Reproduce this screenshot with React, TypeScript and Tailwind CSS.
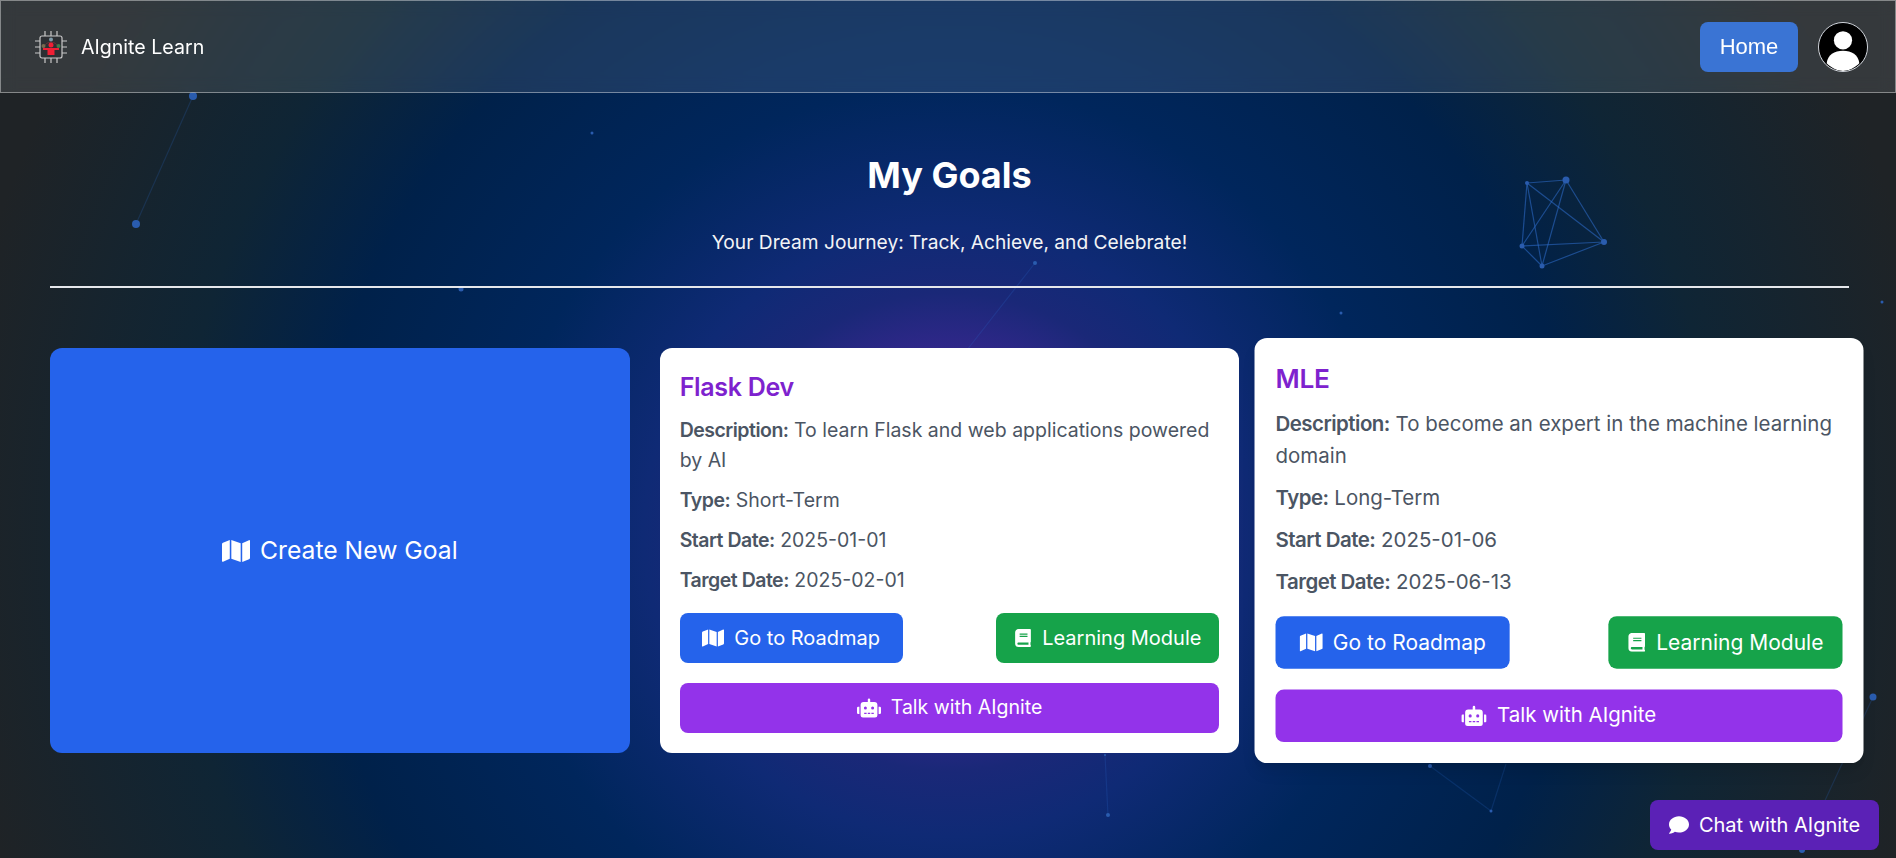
import { FaMap, FaBook, FaRobot, FaComment } from "react-icons/fa";

const dots: [number, number, number][] = [
  [193, 96, 4], [136, 224, 4], [592, 133, 1.5], [461, 289, 2.5], [1035, 263, 2], [967, 350, 1],
  [1527, 183, 2], [1566, 180, 3.5], [1604, 242, 3], [1522, 246, 2.5], [1542, 266, 2.5],
  [1341, 313, 1.5], [1882, 302, 1.5], [1430, 766, 2], [1491, 811, 1.5], [1873, 697, 3.5],
  [1802, 850, 3], [1108, 815, 2], [1105, 755, 1],
];

const links: [number, number, number, number][] = [
  [193, 96, 136, 224], [1035, 263, 967, 350],
  [1527, 183, 1566, 180], [1527, 183, 1542, 266], [1527, 183, 1522, 246], [1527, 183, 1604, 242],
  [1566, 180, 1522, 246], [1566, 180, 1542, 266], [1566, 180, 1604, 242],
  [1522, 246, 1604, 242], [1522, 246, 1542, 266], [1542, 266, 1604, 242],
  [1430, 766, 1491, 811], [1491, 811, 1506, 764], [1873, 697, 1802, 850], [1108, 815, 1105, 755],
];

const goals = [
  {
    title: "Flask Dev",
    description: "To learn Flask and web applications powered by AI",
    type: "Short-Term",
    start: "2025-01-01",
    target: "2025-02-01",
    featured: false,
  },
  {
    title: "MLE",
    description: "To become an expert in the machine learning domain",
    type: "Long-Term",
    start: "2025-01-06",
    target: "2025-06-13",
    featured: true,
  },
];

const Particles = () => (
  <svg className="absolute inset-0 h-full w-full" viewBox="0 0 1896 858">
    {links.map(([x1, y1, x2, y2], i) => (
      <line
        key={i}
        x1={x1}
        y1={y1}
        x2={x2}
        y2={y2}
        stroke="#2f6fd0"
        strokeOpacity={x1 > 1500 && x1 < 1620 ? 0.55 : 0.2}
        strokeWidth="1.2"
      />
    ))}
    {dots.map(([cx, cy, r], i) => (
      <circle key={i} cx={cx} cy={cy} r={r} fill="#2a5cae" />
    ))}
  </svg>
);

const Logo = () => (
  <svg width="34" height="34" viewBox="0 0 34 34" fill="none">
    <rect x="6" y="6" width="22" height="22" rx="2" stroke="#c9c9c9" strokeWidth="1.2" fill="#2c2f33" />
    <path
      d="M11 1v5M17 1v5M23 1v5M11 28v5M17 28v5M23 28v5M1 11h5M1 17h5M1 23h5M28 11h5M28 17h5M28 23h5"
      stroke="#c9c9c9"
      strokeWidth="1.2"
    />
    <path d="M10 17a7.500 7.500 0 0 1 14 0" stroke="#7a3038" strokeWidth="0.8" />
    <circle cx="17" cy="9.500" r="2" fill="#7f9aa8" />
    <circle cx="9.500" cy="16" r="2" fill="#7a6a50" />
    <circle cx="24.500" cy="16" r="2" fill="#3f7a4a" />
    <circle cx="17" cy="15" r="2.500" fill="#f01f35" />
    <path d="M9 18h16v2h-4.500v5h-7v-5H9z" fill="#f01f35" />
  </svg>
);

const Avatar = () => (
  <svg className="h-[50px] w-[50px] rounded-full border border-gray-300" viewBox="0 0 50 50">
    <circle cx="25" cy="25" r="25" fill="#000" />
    <circle cx="25" cy="18" r="9.500" fill="#fff" />
    <path d="M8 42c1-9 8-13 17-13s16 4 17 13c-4 4-10 8-17 8S12 46 8 42z" fill="#fff" />
  </svg>
);

const Field = ({ label, value }: { label: string; value: string }) => (
  <p className="mb-[10px] text-[19.5px] leading-[30px] text-[#4b5563]">
    <span className="font-semibold tracking-[-0.5px]">{label}:</span> {value}
  </p>
);

const GoalCard = ({ goal }: { goal: (typeof goals)[number] }) => (
  <div className={`rounded-xl bg-white px-5 pt-[23px] pb-5 ${goal.featured ? "scale-105 shadow-lg" : ""}`}>
    <h2 className="mb-3 text-[25px] leading-8 font-semibold tracking-[-0.3px] text-[#7e22ce]">{goal.title}</h2>
    <Field label="Description" value={goal.description} />
    <Field label="Type" value={goal.type} />
    <Field label="Start Date" value={goal.start} />
    <Field label="Target Date" value={goal.target} />
    <div className="mt-[18px] flex justify-between text-[20px] text-white">
      <button className="flex h-[50px] w-[223px] items-center justify-center gap-[10px] rounded-lg bg-[#2563eb]">
        <FaMap className="text-[22px]" />
        Go to Roadmap
      </button>
      <button className="flex h-[50px] w-[223px] items-center justify-center gap-[10px] rounded-lg bg-[#16a34a]">
        <FaBook className="text-[18px]" />
        Learning Module
      </button>
    </div>
    <button className="mt-5 flex h-[50px] w-full items-center justify-center gap-[10px] rounded-lg bg-[#9333ea] text-[19.5px] text-white">
      <FaRobot className="text-[24px]" />
      Talk with AIgnite
    </button>
  </div>
);

export default function App() {
  return (
    <div className="relative h-screen overflow-hidden bg-[radial-gradient(circle_at_50%_62%,#4a2a9c_0%,#33278c_16%,#1a2878_22%,#0f2a75_28%,#00265c_41%,#00214a_58%,#0f2535_71%,#1f2326_92%)] font-['Inter',sans-serif] text-white">
      <Particles />

      <div className="relative">
        <nav className="flex h-[93px] items-center justify-between border border-white/40 bg-white/10 pr-[27px] pl-[33px] backdrop-blur-sm">
          <div className="flex items-center gap-[13px]">
            <Logo />
            <span className="pt-[3px] text-[19.6px]">AIgnite Learn</span>
          </div>
          <div className="flex items-center gap-5">
            <button className="h-[50px] w-[98px] rounded-lg bg-[#3a74d4] font-['Liberation_Sans',sans-serif] text-[22px] text-white">
              Home
            </button>
            <Avatar />
          </div>
        </nav>

        <main className="pr-[47px] pl-[50px]">
          <header className="border-b-2 border-gray-200 pt-[60px] pb-[30px] text-center">
            <h1 className="text-[36px] leading-[44px] font-bold">My Goals</h1>
            <p className="mt-[31px] text-[19.2px] leading-7 text-gray-100">
              Your Dream Journey: Track, Achieve, and Celebrate!
            </p>
          </header>

          <div className="mt-[60px] grid grid-cols-3 gap-[30px]">
            <button className="flex items-center justify-center gap-[10px] rounded-xl bg-[#2563eb] text-[24.7px] text-white">
              <FaMap className="text-[28px]" />
              Create New Goal
            </button>
            {goals.map((goal) => (
              <GoalCard key={goal.title} goal={goal} />
            ))}
          </div>
        </main>
      </div>

      <button className="fixed right-[17px] bottom-2 flex h-[50px] w-[229px] items-center justify-center gap-[10px] rounded-lg bg-[#5b21b6] text-[20px] text-white">
        <FaComment className="text-[20px]" />
        Chat with AIgnite
      </button>
    </div>
  );
}
